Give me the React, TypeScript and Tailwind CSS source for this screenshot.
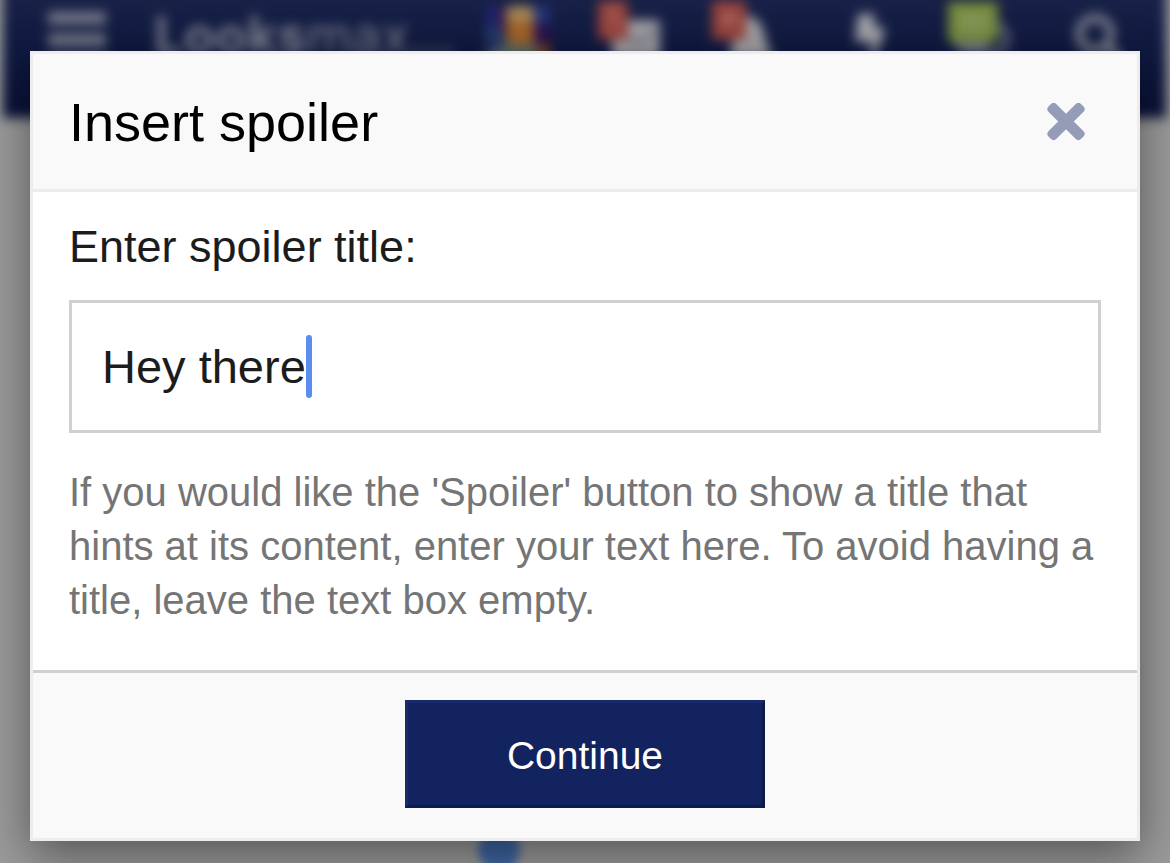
import { useState } from "react";
import type { FormEvent, ReactNode } from "react";

type NavItemProps = {
  label: string;
  children: ReactNode;
};

const NavItem = ({ label, children }: NavItemProps) => (
  <a
    href="#"
    aria-label={label}
    tabIndex={-1}
    className="flex w-[115px] shrink-0 justify-center"
  >
    <svg viewBox="0 0 100 78" className="h-[78px] w-[100px]">
      {children}
    </svg>
  </a>
);

const SiteHeader = () => (
  <header className="-mt-5 mr-1 ml-[3px] h-[138px] bg-linear-to-b from-[#1b2349] via-[#0f1940] to-[#0a1138] pt-5 pr-4">
    <nav className="flex h-[78px] items-center">
      <a href="#" aria-label="Menu" tabIndex={-1} className="ml-[45px] shrink-0">
        <svg viewBox="0 0 58 54" className="h-[54px] w-[58px]" fill="#7a7d8c">
          <rect y="0" width="58" height="12" />
          <rect y="22" width="58" height="12" />
          <rect y="44" width="58" height="10" />
        </svg>
      </a>
      <div className="ml-12 min-w-0 flex-1 self-start font-['Inter',sans-serif] text-[52px] leading-[72px] whitespace-nowrap text-[#7c7f8e]">
        <span className="font-bold">Looks</span>max…
      </div>

      <NavItem label="Account">
        <rect x="18" y="6" width="64" height="64" fill="#202a5c" />
        <rect x="18" y="6" width="14" height="20" fill="#1f2370" />
        <rect x="18" y="26" width="18" height="16" fill="#243c6e" />
        <rect x="66" y="6" width="16" height="18" fill="#23347a" />
        <rect x="66" y="24" width="16" height="20" fill="#2b0f4f" />
        <rect x="30" y="6" width="8" height="26" fill="#30194b" />
        <rect x="38" y="6" width="28" height="40" rx="6" fill="#a06228" />
        <rect x="38" y="6" width="28" height="15" rx="6" fill="#a68957" />
        <path d="M18 70V54l20-10 13 3 15-3 16 10v16z" fill="#516a68" />
        <rect x="68" y="44" width="14" height="22" fill="#6b4120" />
      </NavItem>

      <NavItem label="Conversations">
        <rect x="29" y="20" width="48" height="38" rx="4" fill="#a0a0a4" />
        <path d="M36 30l18 14 20-14" fill="none" stroke="#6a6f82" strokeWidth="4" />
        <rect x="15" y="1" width="30" height="39" rx="4" fill="#98433c" />
        <path d="M26 12l5-3v20" fill="none" stroke="#ab716b" strokeWidth="3" />
      </NavItem>

      <NavItem label="Alerts">
        <path
          d="M49 16c12 0 16 12 18 20 1 8 3 12 6 16v6H32v-6c3-6 3-12 3-20 1-9 5-16 14-16z"
          fill="#a0a0a4"
        />
        <rect x="14" y="1" width="34" height="39" rx="4" fill="#98433c" />
        <circle cx="31" cy="19" r="6" fill="#a8706c" />
      </NavItem>

      <NavItem label="What's new">
        <path d="M45 14h17l-2 13h11v7L57 68l2-26H42z" fill="#a4a5aa" />
      </NavItem>

      <NavItem label="Chat">
        <circle cx="64" cy="39" r="15" fill="none" stroke="#676b80" strokeWidth="6" />
        <ellipse cx="44" cy="38" rx="20" ry="16" fill="#737785" />
        <rect x="20" y="2" width="50" height="40" rx="2" fill="#758c3c" />
        <rect x="31" y="13" width="28" height="18" fill="#849458" />
      </NavItem>

      <NavItem label="Search">
        <g fill="none" stroke="#80838f" strokeWidth="8">
          <circle cx="52" cy="34" r="16" />
          <path d="M63 45l15 15" />
        </g>
      </NavItem>
    </nav>
  </header>
);

// Page that sits dimmed and out of focus behind the open dialog
const Backdrop = () => (
  <div className="absolute inset-0 overflow-hidden bg-[#9b9b9b]">
    <div className="h-full blur-[6px]">
      <SiteHeader />
    </div>
    <div className="absolute bottom-[-8px] left-[478px] size-[42px] rounded-full bg-[#4067a4] blur-[4px]" />
  </div>
);

const SpoilerDialog = () => {
  const [title, setTitle] = useState("Hey there");

  const handleSubmit = (e: FormEvent) => {
    e.preventDefault();
  };

  return (
    <form
      role="dialog"
      aria-labelledby="dialog-title"
      onSubmit={handleSubmit}
      className="border-3 border-[#ededef] bg-white shadow-[0_15px_45px_rgba(0,0,0,0.45)]"
    >
      <div className="flex items-center justify-between border-b-3 border-[#ececec] bg-[#f9f9f9] pt-8 pr-[52px] pb-[31px] pl-9">
        <h2 id="dialog-title" className="text-[54px] leading-[72px] text-black">
          Insert spoiler
        </h2>
        <button type="button" aria-label="Close">
          <svg viewBox="0 0 38 38" className="size-[38px]" fill="#959cb8">
            <rect x="-4" y="13" width="46" height="11" rx="4" transform="rotate(45 19 18.5)" />
            <rect x="-4" y="13" width="46" height="11" rx="4" transform="rotate(-45 19 18.5)" />
          </svg>
        </button>
      </div>

      <div className="px-9 pt-[23px] pb-[43px]">
        <label
          htmlFor="spoiler-title"
          className="block text-[45px] leading-[64px] text-[#1c1c1c]"
        >
          Enter spoiler title:
        </label>
        <div className="mt-[21px] flex h-[133px] items-center border-3 border-[#d0d0d0] px-[30px]">
          <input
            id="spoiler-title"
            type="text"
            value={title}
            onChange={(e) => setTitle(e.target.value)}
            className="max-w-full text-[47px] leading-[64px] text-[#1c1c1c] caret-transparent outline-none [field-sizing:content]"
          />
          <span className="h-[63px] w-1.5 shrink-0 rounded-full bg-[#5b8def]" />
        </div>
        <p className="mt-8 text-[40px] leading-[54px] text-[#757575]">
          If you would like the 'Spoiler' button to show a title that hints at its
          content, enter your text here. To avoid having a title, leave the text
          box empty.
        </p>
      </div>

      <div className="flex justify-center border-t-3 border-[#d0d0d0] bg-[#f9f9fa] pt-[27px] pb-[30px]">
        <button
          type="submit"
          className="h-[108px] w-[360px] border-3 border-t-[#182a6b] border-r-[#0e1a49] border-b-[#0e1a49] border-l-[#182a6b] bg-[#13235f] pt-1 text-[39px] text-white"
        >
          Continue
        </button>
      </div>
    </form>
  );
};

const App = () => (
  <div className="relative min-h-screen overflow-hidden font-['Liberation_Sans',Arial,sans-serif]">
    <Backdrop />
    <main className="relative px-[30px] pt-[51px] pb-[22px]">
      <SpoilerDialog />
    </main>
  </div>
);

export default App;
